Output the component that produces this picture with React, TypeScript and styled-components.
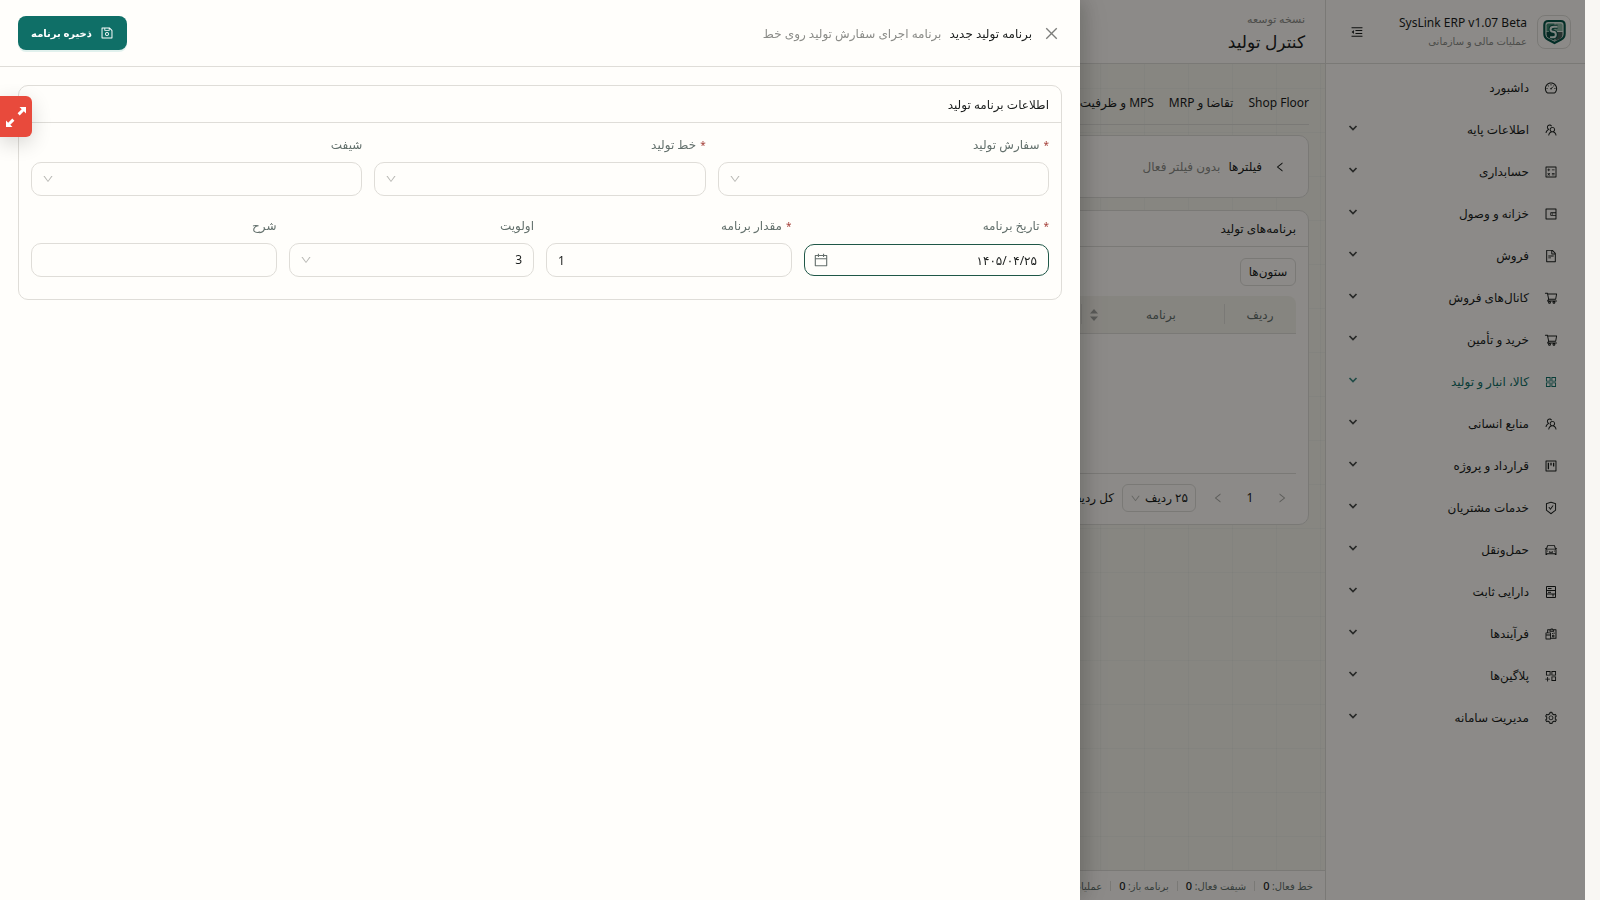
import React from "react";
import styled, { createGlobalStyle, css } from "styled-components";
import {
  AiOutlineAppstore,
  AiOutlineAppstoreAdd,
  AiOutlineCalculator,
  AiOutlineCalendar,
  AiOutlineCar,
  AiOutlineClose,
  AiOutlineDashboard,
  AiOutlineDown,
  AiOutlineFileText,
  AiOutlineLeft,
  AiOutlineMenuFold,
  AiOutlineProject,
  AiOutlineReconciliation,
  AiOutlineRight,
  AiOutlineSafetyCertificate,
  AiOutlineSave,
  AiOutlineSetting,
  AiOutlineShoppingCart,
  AiOutlineTeam,
  AiOutlineWallet,
} from "react-icons/ai";

const c = {
  ink: "#1b1e1d",
  muted: "#8b8c88",
  label: "#63706c",
  line: "#dfddd8",
  surface: "#fffefb",
  panel: "#fffcf7",
  page: "#f6f4ec",
  gutter: "#f9f7f3",
  green: "#0f6f67",
  focus: "#1f5747",
  red: "#e84a3c",
  required: "#a5403a",
};

const GlobalStyle = createGlobalStyle`
  *, *::before, *::after { box-sizing: border-box; }
  body {
    margin: 0;
    background: ${c.gutter};
    color: ${c.ink};
    font: 12px/20px "Noto Sans", "DejaVu Sans", sans-serif;
  }
  button, input, select { font: inherit; color: inherit; }
  svg { display: block; flex: none; }
`;

const Shell = styled.div`
  display: flex;
  min-height: 100vh;
  margin-right: 15px;
`;

/* Sidebar */

const Sidebar = styled.aside`
  flex: none;
  width: 260px;
  background: ${c.panel};
  border-left: 1px solid ${c.line};
`;

const Brand = styled.div`
  display: flex;
  align-items: center;
  gap: 10px;
  height: 64px;
  padding: 0 14px 0 24px;
  border-bottom: 1px solid ${c.line};
`;

const LogoBox = styled.div`
  display: grid;
  place-items: center;
  width: 34px;
  height: 34px;
  border: 1px solid ${c.line};
  border-radius: 8px;
`;

const BrandText = styled.div`
  flex: 1;
  line-height: 19px;
`;

const Hint = styled.div<{ $large?: boolean }>`
  color: ${c.muted};
  font-size: ${(p) => (p.$large ? 11 : 10)}px;
  line-height: 18px;
`;

const IconButton = styled.button<{ $size?: number }>`
  display: grid;
  place-items: center;
  padding: 0;
  border: 0;
  background: none;
  font-size: ${(p) => p.$size ?? 14}px;
`;

const Menu = styled.nav`
  display: flex;
  flex-direction: column;
  padding: 3px 27px 0 22px;
`;

const MenuLink = styled.a<{ $active?: boolean }>`
  display: flex;
  align-items: center;
  height: 42px;
  gap: 15px;
  color: ${(p) => (p.$active ? c.green : c.ink)};
  text-decoration: none;
  > svg { font-size: 14px; }
  span { flex: 1; }
`;

const MenuArrow = styled.svg`
  margin-bottom: 4px;
  opacity: 0.8;
`;

/* Page behind the drawer */

const Main = styled.div`
  flex: 1;
  min-width: 0;
  display: flex;
  flex-direction: column;
  background-color: ${c.page};
  background-image: linear-gradient(to right, rgba(20, 80, 60, 0.03) 1px, transparent 1px),
    linear-gradient(to bottom, rgba(20, 80, 60, 0.03) 1px, transparent 1px);
  background-size: 44px 44px;
`;

const PageHead = styled.header`
  height: 64px;
  padding: 10px 20px 0;
  background: ${c.panel};
  border-bottom: 1px solid ${c.line};
`;

const PageTitle = styled.h1`
  margin: 0;
  font-size: 17px;
  line-height: 28px;
  font-weight: 400;
`;

const Content = styled.main`
  flex: 1;
  padding: 16px 16px 0;
`;

const Tabs = styled.nav`
  display: flex;
  gap: 15px;
  height: 45px;
  margin-bottom: 10px;
  padding-top: 2px;
  align-items: center;
  border-bottom: 1px solid ${c.line};
  a { color: inherit; text-decoration: none; white-space: nowrap; }
`;

const Card = styled.section`
  background: ${c.panel};
  border: 1px solid ${c.line};
  border-radius: 10px;
  & + & { margin-top: 12px; }
`;

const FilterBar = styled.div`
  display: flex;
  align-items: center;
  gap: 8px;
  height: 61px;
  padding: 0 22px;
  ${IconButton} { margin-left: 4px; }
`;

const Strong = styled.span`
  color: ${c.ink};
  white-space: nowrap;
`;

const Faint = styled.span`
  color: ${c.muted};
  white-space: nowrap;
`;

const CardHead = styled.h2`
  margin: 0;
  padding: 0 12px;
  height: 36px;
  line-height: 36px;
  font-size: 12px;
  font-weight: 400;
  border-bottom: 1px solid ${c.line};
`;

const ListBody = styled.div`
  padding: 11px 12px 12px;
`;

const SmallButton = styled.button`
  display: block;
  width: 56px;
  height: 28px;
  padding: 0;
  border: 1px solid ${c.line};
  border-radius: 6px;
  background: none;
`;

const Table = styled.table`
  width: 100%;
  margin-top: 10px;
  border-collapse: separate;
  border-spacing: 0;
  table-layout: fixed;
  th {
    position: relative;
    height: 38px;
    padding: 0;
    font-weight: 400;
    color: ${c.label};
    background: #f5f2ea;
    border-bottom: 1px solid ${c.line};
  }
  th:first-child { border-top-right-radius: 8px; }
  th:not(:last-child)::after {
    content: "";
    position: absolute;
    left: 0;
    top: 8px;
    height: 20px;
    border-left: 1px solid ${c.line};
  }
  td { height: 140px; border-bottom: 1px solid ${c.line}; }
`;

const SortHead = styled.div`
  display: flex;
  align-items: center;
  padding-left: 9px;
  color: ${c.label};
  span { flex: 1; }
`;

const Pager = styled.div`
  display: flex;
  align-items: center;
  height: 28px;
  margin-top: 10px;
  > button { width: 28px; height: 28px; }
`;

const PageButton = styled(IconButton)<{ $dim?: boolean }>`
  margin-left: 4px;
  color: ${(p) => (p.$dim ? "#a9a9a5" : c.ink)};
`;

const Footer = styled.footer`
  display: flex;
  align-items: center;
  height: 30px;
  padding: 0 12px;
  background: ${c.panel};
  border-top: 1px solid ${c.line};
  color: ${c.label};
  font-size: 10px;
`;

const Stat = styled.span`
  white-space: nowrap;
  line-height: 10px;
  & + & {
    margin-right: 8px;
    padding-right: 8px;
    border-right: 1px solid ${c.line};
  }
  b { color: ${c.ink}; font-size: 11px; font-weight: 500; }
`;

/* Drawer */

const Scrim = styled.div`
  position: fixed;
  inset: 0 15px 0 0;
  background: rgba(0, 0, 0, 0.45);
`;

const Drawer = styled.aside`
  position: fixed;
  inset: 0 auto 0 0;
  width: 1080px;
  max-width: 100%;
  background: ${c.surface};
  box-shadow: 6px 0 16px rgba(0, 0, 0, 0.12), 3px 0 32px rgba(0, 0, 0, 0.12);
`;

const DrawerHead = styled.header`
  display: flex;
  align-items: center;
  gap: 8px;
  height: 67px;
  padding: 0 20px 0 18px;
  border-bottom: 1px solid ${c.line};
  ${IconButton} { margin-left: 3px; color: #7c7d7a; }
  ${Strong}, ${Faint} { padding-top: 2px; }
`;

const SaveButton = styled.button`
  display: flex;
  align-items: center;
  justify-content: center;
  gap: 8px;
  width: 109px;
  height: 34px;
  margin-right: auto;
  padding: 0;
  border: 0;
  border-radius: 8px;
  background: ${c.green};
  color: #fff;
  font-size: 10px;
  font-weight: 700;
  white-space: nowrap;
  box-shadow: 0 2px 0 rgba(10, 150, 140, 0.12);
`;

const DrawerBody = styled.div`
  padding: 18px;
`;

const FormCard = styled(Card)`
  background: ${c.surface};
  ${CardHead} { height: 37px; line-height: 38px; }
`;

const Form = styled.form`
  display: flex;
  flex-direction: column;
  gap: 20px;
  padding: 12px 12px 22px;
`;

const FormRow = styled.div`
  display: flex;
  gap: 12px;
`;

const Field = styled.div`
  flex: 1;
  min-width: 0;
`;

const FieldLabel = styled.label`
  display: block;
  height: 27px;
  color: ${c.label};
  line-height: 20px;
  i { color: ${c.required}; font-size: 10px; font-style: normal; margin-left: 4px; }
`;

const Control = styled.div`
  position: relative;
  display: flex;
  align-items: center;
  height: 34px;
`;

const Adornment = styled.span<{ $dark?: boolean }>`
  position: absolute;
  inset: 0 auto 0 0;
  width: 34px;
  display: grid;
  place-items: center;
  color: ${(p) => (p.$dark ? "#66706d" : "#b9b9b5")};
  pointer-events: none;
`;

const box = css`
  width: 100%;
  height: 34px;
  padding: 0 11px;
  border: 1px solid ${c.line};
  border-radius: 10px;
  background: ${c.surface};
  outline: none;
`;

const Input = styled.input<{ $ltr?: boolean; $active?: boolean }>`
  ${box}
  ${(p) => p.$ltr && css`direction: ltr; text-align: left;`}
  ${(p) => p.$active && css`height: 32px; border-color: ${c.focus};`}
`;

const Select = styled.select`
  ${box}
  appearance: none;
`;

const PageSize = styled(Control)`
  width: 74px;
  height: 28px;
  margin: 0 4px 0 8px;
  ${Select} {
    height: 28px;
    padding: 0 7px;
    border-radius: 6px;
    background: none;
  }
  ${Adornment} { width: 26px; }
`;

const ExpandTab = styled.button`
  position: fixed;
  left: 0;
  top: 96px;
  display: grid;
  place-items: center;
  width: 32px;
  height: 41px;
  padding: 0;
  border: 0;
  border-radius: 0 6px 6px 0;
  background: ${c.red};
  box-shadow: 0 6px 20px rgba(0, 0, 0, 0.16);
`;

const Logo = () => (
  <svg width="23" height="26" viewBox="0 0 26 28" aria-hidden="true">
    <path d="M6 1.500h14Q24.500 1.500 24.500 6v10q0 4.500-4 6.500L13 26.500l-7.500-4Q1.500 20.500 1.500 16V6Q1.500 1.500 6 1.500z" fill="#dfe9e2" stroke="#075447" strokeWidth="2.400" />
    <path d="M6 4.500h7v9H4V6.500q0-2 2-2z" fill="#3f8a72" />
    <path d="M14 4.500h6q2 0 2 2V13h-8z" fill="#8db7a4" />
    <path d="M14 14h8v3q0 3-2.500 4.500L14 24z" fill="#4a5f5a" />
    <path d="M4 14h9v10l-6.500-3.200Q4 19.500 4 17z" fill="#0e4a40" />
    <path d="M16.500 8h-4q-4 0-4 2.800t3 3 3 3.200-3.500 3H8" fill="none" stroke="#075447" strokeWidth="4.500" />
    <path d="M16.500 8h-4q-4 0-4 2.800t3 3 3 3.200-3.500 3H8" fill="none" stroke="#e9f3ed" strokeWidth="2.200" />
  </svg>
);

const AssetsIcon = () => (
  <svg width="14" height="14" viewBox="0 0 14 14" fill="none" stroke="currentColor">
    <path d="M2.500 1.500h9v11h-9zM2.500 5.500h9M2.500 9h9M4 3.500h3.500M4 7.300h3M9 9v2.500" />
  </svg>
);

const Caret = () => (
  <MenuArrow width="10" height="8" viewBox="0 0 10 8" fill="none" stroke="currentColor" strokeWidth="1.700">
    <path d="M1.500 2 5 5.500 8.500 2" />
  </MenuArrow>
);

const menu: { text: string; icon: React.ComponentType; leaf?: boolean; active?: boolean }[] = [
  { text: "داشبورد", icon: AiOutlineDashboard, leaf: true },
  { text: "اطلاعات پایه", icon: AiOutlineTeam },
  { text: "حسابداری", icon: AiOutlineCalculator },
  { text: "خزانه و وصول", icon: AiOutlineWallet },
  { text: "فروش", icon: AiOutlineFileText },
  { text: "کانال‌های فروش", icon: AiOutlineShoppingCart },
  { text: "خرید و تأمین", icon: AiOutlineShoppingCart },
  { text: "کالا، انبار و تولید", icon: AiOutlineAppstore, active: true },
  { text: "منابع انسانی", icon: AiOutlineTeam },
  { text: "قرارداد و پروژه", icon: AiOutlineProject },
  { text: "خدمات مشتریان", icon: AiOutlineSafetyCertificate },
  { text: "حمل‌ونقل", icon: AiOutlineCar },
  { text: "دارایی ثابت", icon: AssetsIcon },
  { text: "فرآیندها", icon: AiOutlineReconciliation },
  { text: "پلاگین‌ها", icon: AiOutlineAppstoreAdd },
  { text: "مدیریت سامانه", icon: AiOutlineSetting },
];

const Label = ({ id, required, children }: { id: string; required?: boolean; children: React.ReactNode }) => (
  <FieldLabel htmlFor={id}>
    {required && <i>*</i>}
    {children}
  </FieldLabel>
);

const SelectField = ({ id, label, required, value }: { id: string; label: string; required?: boolean; value?: string }) => (
  <Field>
    <Label id={id} required={required}>{label}</Label>
    <Control>
      <Select id={id} defaultValue={value ?? ""}>
        <option value={value ?? ""}>{value ?? ""}</option>
      </Select>
      <Adornment><AiOutlineDown size={12} /></Adornment>
    </Control>
  </Field>
);

export default function App() {
  return (
    <>
      <GlobalStyle />
      <Shell dir="rtl" lang="fa">
        <Sidebar>
          <Brand>
            <LogoBox><Logo /></LogoBox>
            <BrandText>
              <bdi>SysLink ERP v1.07 Beta</bdi>
              <Hint>عملیات مالی و سازمانی</Hint>
            </BrandText>
            <IconButton aria-label="منو"><AiOutlineMenuFold /></IconButton>
          </Brand>
          <Menu>
            {menu.map((m) => (
              <MenuLink href="#" key={m.text} $active={m.active}>
                <m.icon />
                <span>{m.text}</span>
                {!m.leaf && <Caret />}
              </MenuLink>
            ))}
          </Menu>
        </Sidebar>

        <Main>
          <PageHead>
            <Hint $large>نسخه توسعه</Hint>
            <PageTitle>کنترل تولید</PageTitle>
          </PageHead>
          <Content>
            <Tabs>
              <a href="#">Shop Floor</a>
              <a href="#">تقاضا و MRP</a>
              <a href="#">MPS و ظرفیت</a>
            </Tabs>
            <Card>
              <FilterBar>
                <IconButton $size={12} aria-label="باز کردن فیلترها"><AiOutlineLeft /></IconButton>
                <Strong>فیلترها</Strong>
                <Faint>بدون فیلتر فعال</Faint>
              </FilterBar>
            </Card>
            <Card>
              <CardHead>برنامه‌های تولید</CardHead>
              <ListBody>
                <SmallButton>ستون‌ها</SmallButton>
                <Table>
                  <colgroup>
                    <col width="72" />
                    <col width="143" />
                    <col />
                  </colgroup>
                  <thead>
                    <tr>
                      <th>ردیف</th>
                      <th>
                        <SortHead>
                          <span>برنامه</span>
                          <svg width="8" height="12" viewBox="0 0 8 12" fill="#a3a39f">
                            <path d="M4 0 8 4.500H0zM4 12 0 7.500h8z" />
                          </svg>
                        </SortHead>
                      </th>
                      <th />
                    </tr>
                  </thead>
                  <tbody>
                    <tr><td colSpan={3} /></tr>
                  </tbody>
                </Table>
                <Pager>
                  <PageButton $size={12} $dim aria-label="قبلی"><AiOutlineRight /></PageButton>
                  <PageButton $size={12}>1</PageButton>
                  <PageButton $size={12} $dim aria-label="بعدی"><AiOutlineLeft /></PageButton>
                  <PageSize>
                    <Select aria-label="تعداد ردیف"><option>۲۵ ردیف</option></Select>
                    <Adornment><AiOutlineDown size={11} /></Adornment>
                  </PageSize>
                  <Strong>کل ردیف‌ها</Strong>
                </Pager>
              </ListBody>
            </Card>
          </Content>
          <Footer>
            <Stat>خط فعال: <b>0</b></Stat>
            <Stat>شیفت فعال: <b>0</b></Stat>
            <Stat>برنامه باز: <b>0</b></Stat>
            <Stat>عملیات باز</Stat>
          </Footer>
        </Main>

        <Scrim />
        <Drawer role="dialog" aria-label="برنامه تولید جدید">
          <DrawerHead>
            <IconButton $size={17} aria-label="بستن"><AiOutlineClose /></IconButton>
            <Strong>برنامه تولید جدید</Strong>
            <Faint>برنامه اجرای سفارش تولید روی خط</Faint>
            <SaveButton><AiOutlineSave size={14} />ذخیره برنامه</SaveButton>
          </DrawerHead>
          <DrawerBody>
            <FormCard>
              <CardHead>اطلاعات برنامه تولید</CardHead>
              <Form>
                <FormRow>
                  <SelectField id="order" label="سفارش تولید" required />
                  <SelectField id="line" label="خط تولید" required />
                  <SelectField id="shift" label="شیفت" />
                </FormRow>
                <FormRow>
                  <Field>
                    <Label id="date" required>تاریخ برنامه</Label>
                    <Control>
                      <Input id="date" $active defaultValue="۱۴۰۵/۰۴/۲۵" />
                      <Adornment $dark><AiOutlineCalendar size={16} /></Adornment>
                    </Control>
                  </Field>
                  <Field>
                    <Label id="qty" required>مقدار برنامه</Label>
                    <Control><Input id="qty" $ltr defaultValue="1" /></Control>
                  </Field>
                  <SelectField id="priority" label="اولویت" value="3" />
                  <Field>
                    <Label id="note">شرح</Label>
                    <Control><Input id="note" /></Control>
                  </Field>
                </FormRow>
              </Form>
            </FormCard>
          </DrawerBody>
        </Drawer>
        <ExpandTab aria-label="تمام صفحه">
          <svg width="20" height="20" viewBox="0 0 20 20" fill="#fff">
            <path d="M13.500 0H20v6.500l-2.200-2.200-4.100 4.100-2.100-2.100 4.100-4.100zM0 13.500l2.200 2.200 4.100-4.100 2.100 2.100-4.100 4.100L6.500 20H0z" />
          </svg>
        </ExpandTab>
      </Shell>
    </>
  );
}
